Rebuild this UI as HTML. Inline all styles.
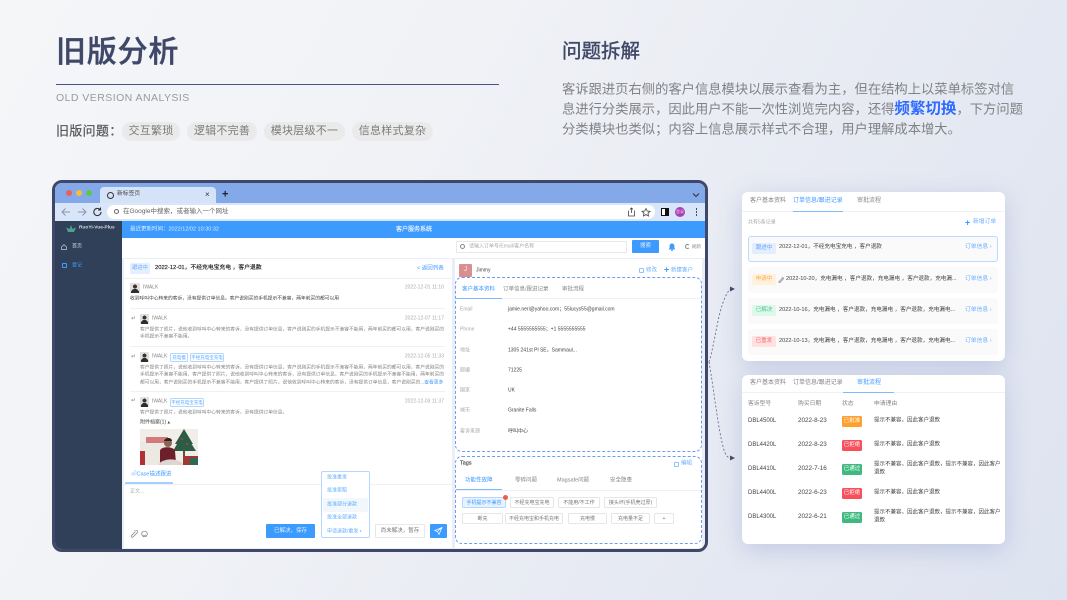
<!DOCTYPE html>
<html lang="zh"><head><meta charset="utf-8"><title>旧版分析</title>
<style>
*{margin:0;padding:0;box-sizing:border-box}
html,body{width:1067px;height:600px;overflow:hidden}
body{position:relative;font-family:"Liberation Sans","Noto Sans CJK SC",sans-serif;background:linear-gradient(120deg,#f5f6f8 0%,#f0f2f6 35%,#e8ebf3 62%,#dde3f0 100%)}
div,span.a,svg.a{position:absolute}
.t{position:absolute;white-space:nowrap;transform:translateY(-50%);line-height:1}
.chip{position:absolute;top:122px;height:19px;border-radius:10px;background:#eaeaea;color:#7b7b7b;font-size:11px;letter-spacing:.25px;line-height:19px;text-align:center;white-space:nowrap}
.s47{font-size:4.75px}.s5{font-size:5px}.s55{font-size:5.5px}.s58{font-size:5.8px}.s6{font-size:6px}.s7{font-size:7px}
.g{color:#858585}.d{color:#444}.b{color:#3d9bff}.l{color:#aaa}
.line{background:#eef0f3;height:1px}
.ava{width:10px;height:10px;background:radial-gradient(ellipse 42% 42% at 50% 100%,#2e2c2c 97%,transparent),radial-gradient(circle at 50% 36%,#3f342c 0 24%,transparent 26%),#e2e0dd;border-radius:1px}
.tag{position:absolute;height:9px;border:.7px solid #b3d8ff;border-radius:1.5px;color:#57a6ff;font-size:4.5px;line-height:8px;text-align:center;white-space:nowrap}
.mt{position:absolute;height:11px;border:.7px solid #e4e6ea;border-radius:1.5px;color:#777;font-size:5px;line-height:10px;text-align:center;white-space:nowrap;background:#fff}
.card{border-radius:6px;background:#fff;box-shadow:0 6px 24px rgba(110,130,190,.28)}
.row{left:6px;width:250px;height:26px;background:#fafafa;border-radius:3px}
.bd{left:4px;top:7px;width:24px;height:11px;border-radius:1.5px;font-size:5.5px;line-height:11px;text-align:center}
.st{position:absolute;left:842px;width:20px;height:11px;border-radius:1.5px;color:#fff;font-size:5.5px;line-height:11px;text-align:center;white-space:nowrap}
.r{font-size:5.6px;color:#444}
.k{font-size:5.5px;color:#444}
.lk{font-size:5.8px;color:#6db0ff}
</style></head><body>

<div class="t" style="left:56px;top:53px;font-size:30px;font-weight:500;letter-spacing:.8px;color:#3f4868;-webkit-text-stroke:.4px #3f4868">旧版分析</div>
<div style="left:56px;top:84px;width:443px;height:1px;background:#4a5382"></div>
<div class="t" style="left:56px;top:98px;font-size:10.5px;letter-spacing:.45px;color:#9a9a9a">OLD VERSION ANALYSIS</div>
<div class="t" style="left:56px;top:131px;font-size:13px;letter-spacing:.3px;color:#555;-webkit-text-stroke:.2px #555">旧版问题&#65306;</div>
<div class="chip" style="left:122px;width:58px">交互繁琐</div>
<div class="chip" style="left:187px;width:70px">逻辑不完善</div>
<div class="chip" style="left:264px;width:81px">模块层级不一</div>
<div class="chip" style="left:352px;width:81px">信息样式复杂</div>

<div class="t" style="left:562px;top:52px;font-size:19.5px;color:#3f4868;-webkit-text-stroke:.4px #3f4868">问题拆解</div>
<div class="t" style="left:562px;top:89px;font-size:13.3px;color:#808285">客诉跟进页右侧的客户信息模块以展示查看为主&#65292;但在结构上以菜单标签对信</div>
<div class="t" style="left:562px;top:109px;font-size:13.3px;color:#808285">息进行分类展示&#65292;因此用户不能一次性浏览完内容&#65292;还得<b style="color:#2f6bff;font-size:15.5px;font-weight:700">频繁切换</b>&#65292;下方问题</div>
<div class="t" style="left:562px;top:129px;font-size:13.3px;color:#808285">分类模块也类似&#65307;内容上信息展示样式不合理&#65292;用户理解成本增大。</div>

<!-- browser window -->
<div style="left:52px;top:180px;width:656px;height:372px;border:3px solid #3f4868;border-radius:10px;overflow:hidden;background:#e9eef7"></div>
<div style="left:55px;top:183px;width:650px;height:20px;background:#83a9e8;border-radius:7px 7px 0 0"></div>
<div style="left:65.500px;top:190px;width:6px;height:6px;border-radius:50%;background:#ee5f57"></div>
<div style="left:75.500px;top:190px;width:6px;height:6px;border-radius:50%;background:#f5bd3e"></div>
<div style="left:85.500px;top:190px;width:6px;height:6px;border-radius:50%;background:#5ec745"></div>
<div style="left:100px;top:187px;width:116px;height:16px;background:#d5e3f8;border-radius:4px 4px 0 0"></div>
<div style="left:107px;top:192px;width:7px;height:7px;border-radius:50%;border:1.6px solid #333"></div>
<div class="t s58" style="left:117px;top:195px;color:#444">新标签页</div>
<div class="t" style="left:205px;top:195px;font-size:8px;color:#333">×</div>
<div class="t" style="left:222px;top:195px;font-size:11px;font-weight:700;color:#222">+</div>
<svg class="a" style="left:692px;top:192px" width="8" height="6"><path d="M1 1.5L4 4.5L7 1.5" fill="none" stroke="#333" stroke-width="1"/></svg>
<div style="left:55px;top:203px;width:650px;height:18px;background:#d9e6f9"></div>
<svg class="a" style="left:60px;top:206px" width="44" height="12" fill="none"><path d="M10 6H2M5.5 2.5L2 6L5.5 9.5" stroke="#8b97a8"/><path d="M18 6H26M22.500 2.500L26 6L22.500 9.500" stroke="#8b97a8"/><path d="M41 6a3.600 3.600 0 1 1-1.100-2.600M40.500 1.500V4H38" stroke="#333" stroke-width="1.100"/></svg>
<div style="left:107px;top:205px;width:548px;height:14px;background:#fff;border-radius:7px"></div>
<div style="left:114px;top:209px;width:5px;height:5px;border:.8px solid #666;border-radius:50%"></div>
<div class="t" style="left:123px;top:212px;font-size:6.500px;color:#666">在Google中搜索&#65292;或者输入一个网址</div>
<svg class="a" style="left:627px;top:207px" width="24" height="10" fill="none" stroke="#444" stroke-width=".8"><path d="M2 4H1.500V9H7.500V4H7M4.500 6V1M3 2.500L4.500 1L6 2.500"/><path d="M19 1.500L20.200 4L23 4.300L21 6.200L21.500 9L19 7.600L16.500 9L17 6.200L15 4.300L17.800 4Z"/></svg>
<div style="left:661px;top:208px;width:8px;height:8px;border:1.200px solid #111;background:linear-gradient(90deg,#fff 50%,#111 50%)"></div>
<div style="left:675px;top:207px;width:10px;height:10px;border-radius:50%;background:#a83fb0;color:#e8c8ec;font-size:4px;line-height:10px;text-align:center">登录</div>
<div style="left:695.500px;top:208px;width:1.500px;height:1.500px;background:#333;border-radius:50%;box-shadow:0 3px 0 #333,0 6px 0 #333"></div>

<!-- sidebar -->
<div style="left:55px;top:221px;width:67px;height:328px;background:#2f4058;border-radius:0 0 0 7px"></div>
<svg class="a" style="left:65px;top:225px" width="12" height="8"><path d="M6 0L7.500 4L11 2.500L9 7H3L1 2.500L4.500 4Z" fill="#4ea08f"/></svg>
<div class="t" style="left:79px;top:229px;font-size:4.800px;font-weight:700;color:#d5dbe3">RuoYi-Vue-Plus</div>
<svg class="a" style="left:61px;top:244px" width="6" height="6" fill="none" stroke="#c8d0da" stroke-width=".7"><path d="M.500 3L3 .6L5.500 3V5.500H.5Z"/></svg>
<div class="t s5" style="left:72px;top:247px;color:#c8d0da">首页</div>
<div style="left:62px;top:263px;width:5px;height:5px;border:.8px solid #409eff;border-radius:1px"></div>
<div class="t s5" style="left:72px;top:266px;color:#409eff">登记</div>

<!-- top bar -->
<div style="left:122px;top:221px;width:583px;height:17px;background:#3d9bff"></div>
<div class="t s55" style="left:130px;top:229.500px;color:#d8ebff">最近更新时间&#65306;2022/12/02 10:30:32</div>
<div class="t s6" style="left:396px;top:229.500px;color:#eaf4ff;-webkit-text-stroke:.15px #eaf4ff">客户服务系统</div>
<div style="left:122px;top:238px;width:583px;height:20px;background:#fff"></div>
<div style="left:456px;top:241px;width:171px;height:12px;background:#fff;border:.7px solid #e6e8ec;border-radius:1.500px"></div>
<div style="left:460px;top:244px;width:5px;height:5px;border:.7px solid #888;border-radius:50%"></div>
<div class="t s5" style="left:469px;top:247px;color:#aaa">请输入订单号/Email/客户名称</div>
<div style="left:632px;top:240px;width:27px;height:13px;background:#3d9bff;border-radius:1px;color:#dcedff;font-size:5.500px;line-height:13px;text-align:center">搜索</div>
<svg class="a" style="left:668px;top:243px" width="8" height="8"><path d="M4 .5C2.300.5 1.600 1.800 1.600 3.200V5L.6 6.500H7.400L6.400 5V3.200C6.400 1.800 5.700.5 4 .5Z" fill="#3d9bff"/><rect x="3" y="6.800" width="2" height="1" fill="#3d9bff"/></svg>
<div style="left:685px;top:244px;width:5px;height:5px;border:.7px solid #888;border-radius:50%;border-right-color:transparent"></div>
<div class="t" style="left:692px;top:247px;font-size:4.500px;color:#888">刷新</div>

<!-- left panel -->
<div style="left:124px;top:259px;width:328px;height:289px;background:#fff"></div>
<div style="left:130px;top:263px;width:20px;height:11px;background:#e4f0ff;border-radius:1.500px;color:#6aa9ff;font-size:5.200px;line-height:11px;text-align:center">跟进中</div>
<div class="t s58" style="left:155px;top:269px;color:#222;-webkit-text-stroke:.15px #222">2022-12-01&#65292;不经充电宝充电 &#65292;客户退款</div>
<div class="t s55 b" style="left:417px;top:269px">&lt; 返回列表</div>
<div class="line" style="left:124px;top:278px;width:328px"></div>
<div class="ava" style="left:130px;top:283px"></div>
<div class="t s5 g" style="left:143px;top:288px">IWALK</div>
<div class="t s5 l" style="right:623px;top:288px">2022-12-01 11:10</div>
<div class="t s47 d" style="left:130px;top:299.500px">收到呼叫中心转来的客诉&#65292;没有提供订单信息。客户说刚买的手机提示不兼容&#65292;两年前买的都可以用</div>
<div class="line" style="left:130px;top:308px;width:315px"></div>

<div class="t s6 g" style="left:131px;top:319px">↵</div>
<div class="ava" style="left:140px;top:314px;width:9px"></div>
<div class="t s5 g" style="left:152px;top:319px">IWALK</div>
<div class="t s5 l" style="right:623px;top:319px">2022-12-07 11:17</div>
<div class="t s47 g" style="left:140px;top:330.500px">客户提供了照片&#65292;说他收到呼叫中心转来的客诉&#65292;没有提供订单信息&#65292;客户说刚买的手机提示不兼容不能用&#65292;两年前买的都可以用&#65292;客户说刚买的</div>
<div class="t s47 g" style="left:140px;top:338px">手机提示不兼容不能用。</div>
<div class="line" style="left:130px;top:346px;width:315px"></div>

<div class="t s6 g" style="left:131px;top:357px">↵</div>
<div class="ava" style="left:140px;top:352px;width:9px"></div>
<div class="t s5 g" style="left:152px;top:357px">IWALK</div>
<div class="tag" style="left:170px;top:352.500px;width:18px">充电慢</div>
<div class="tag" style="left:190px;top:352.500px;width:34px">不经充电宝充电</div>
<div class="t s5 l" style="right:623px;top:357px">2022-12-05 11:33</div>
<div class="t s47 g" style="left:140px;top:368.500px">客户提供了照片&#65292;说他收到呼叫中心转来的客诉&#65292;没有提供订单信息&#65292;客户说刚买的手机提示不兼容不能用&#65292;两年前买的都可以用&#65292;客户说刚买的</div>
<div class="t s47 g" style="left:140px;top:376px">手机提示不兼容不能用&#65292;客户提供了照片&#65292;说他收到呼叫中心转来的客诉&#65292;没有提供订单信息&#65292;客户说刚买的手机提示不兼容不能用&#65292;两年前买的</div>
<div class="t s47 g" style="left:140px;top:383.500px">都可以用&#65292;客户说刚买的手机提示不兼容不能用&#65292;客户提供了照片&#65292;说他收到呼叫中心转来的客诉&#65292;没有提供订单信息&#65292;客户说刚买的...<span style="color:#3d9bff">查看更多</span></div>
<div class="line" style="left:130px;top:391px;width:315px"></div>

<div class="t s6 g" style="left:131px;top:401px">↵</div>
<div class="ava" style="left:140px;top:397px;width:9px"></div>
<div class="t s5 g" style="left:152px;top:401.500px">IWALK</div>
<div class="tag" style="left:170px;top:397.500px;width:34px">不经充电宝充电</div>
<div class="t s5 l" style="right:623px;top:401.500px">2022-12-03 11:37</div>
<div class="t s47 g" style="left:140px;top:413.500px">客户提供了照片&#65292;说他收到呼叫中心转来的客诉&#65292;没有提供订单信息。</div>
<div class="t s5 d" style="left:140px;top:423px">附件档案(1) ▴</div>
<svg class="a" style="left:140px;top:429px" width="58" height="36">
<rect width="58" height="36" fill="#f1eeea"/><rect x="0" y="12" width="30" height="24" fill="#ece8e2"/>
<rect x="6" y="8" width="22" height="6" fill="#c44a4a" opacity=".7"/>
<rect x="0" y="22" width="5" height="14" fill="#b22f35"/>
<path d="M44 0L53 15H35Z" fill="#2e5a42"/><path d="M44 3L56 22H33Z" fill="#2b5c44"/><circle cx="42" cy="10" r="1" fill="#d33"/><circle cx="47" cy="15" r="1" fill="#d33"/><rect x="43" y="22" width="2" height="5" fill="#6a4a32"/>
<path d="M20 34V22C20 17 34 17 35 22L36 34Z" fill="#6e1f2c"/><circle cx="28" cy="14" r="4" fill="#8c6750"/><path d="M24 12C25 8 32 8 32 12Z" fill="#2a2422"/>
<path d="M18 36C22 29 38 28 44 36Z" fill="#dcd6d0"/>
<rect x="43" y="27" width="15" height="9" fill="#9d3a36"/><rect x="50" y="29" width="8" height="7" fill="#2f6a4f"/>
</svg>

<!-- editor -->
<div style="left:124px;top:466px;width:328px;height:82px;background:#fff"></div>
<div class="line" style="left:124px;top:483.500px;width:328px"></div>
<div class="t s55 b" style="left:131px;top:474.500px">⏎Case描述跟进</div>
<div style="left:125px;top:482px;width:48px;height:1.500px;background:#a8d0ff"></div>
<div class="t s5 l" style="left:130px;top:491.500px">正文...</div>
<svg class="a" style="left:130px;top:530px" width="20" height="8" fill="none" stroke="#777" stroke-width=".7"><path d="M5.500 1.500L1.500 5.500a1 1 0 0 0 1.500 1.500L7 3a1.700 1.700 0 0 0-2.500-2.500"/><circle cx="14.500" cy="4" r="2.800"/><path d="M13 4.800c.8 1 2.200 1 3 0"/></svg>
<div style="left:266px;top:524px;width:49px;height:14px;background:#3d9bff;border-radius:1px;color:#dcedff;font-size:5.500px;line-height:14px;text-align:center">已解决&#65292;保存</div>
<div style="left:375px;top:524px;width:50px;height:14px;background:#fff;border:.7px solid #e6e8ec;border-radius:1px;color:#777;font-size:5.500px;line-height:13px;text-align:center">尚未解决&#65292;暂存</div>
<div style="left:430px;top:524px;width:17px;height:14px;background:#3d9bff;border-radius:1px"></div>
<svg class="a" style="left:434px;top:527px" width="9" height="8" fill="none" stroke="#fff" stroke-width=".7"><path d="M8 .5L.8 3.500L3.500 4.500L5 7.500ZM3.500 4.500L8 .5"/></svg>

<div style="left:321px;top:470.500px;width:49px;height:67px;background:#fff;border:.8px solid #b5d6ff;border-radius:2px"></div>
<div style="left:323px;top:497.500px;width:45px;height:14px;background:#f2f7fb"></div>
<div class="t s5 b" style="left:327px;top:477.500px;opacity:.8">批准重发</div>
<div class="t s5 b" style="left:327px;top:491px;opacity:.8">批准索赔</div>
<div class="t s5 b" style="left:327px;top:504.500px;opacity:.8">批准部分退款</div>
<div class="t s5 b" style="left:327px;top:518px;opacity:.8">批准全部退款</div>
<div class="t s5 b" style="left:327px;top:531.500px;opacity:.8">申请退款/重发 ▪</div>

<!-- right panel -->
<div style="left:455px;top:259px;width:247px;height:289px;background:#fff"></div>
<div style="left:459px;top:264px;width:13px;height:13px;background:#d98f8f;border-radius:1px;color:#fff;font-size:6px;line-height:13px;text-align:center">J</div>
<div class="t s5 d" style="left:476px;top:270.500px">Jimmy</div>
<div style="left:639px;top:268px;width:5px;height:5px;border:.7px solid #8fc2ff;border-radius:1px"></div>
<div class="t s55" style="left:646px;top:270.500px;color:#6db0ff">修改</div>
<div class="t" style="left:664px;top:270px;font-size:9px;font-weight:700;color:#3d9bff">+</div>
<div class="t s55" style="left:671px;top:270.500px;color:#6db0ff">新建客户</div>

<div style="left:455px;top:277px;width:247px;height:175px;border:1px dashed #6e9cf5;border-radius:7px"></div>
<div style="left:455px;top:456px;width:247px;height:88px;border:1px dashed #6e9cf5;border-radius:7px"></div>

<div class="t s55 b" style="left:462px;top:289.500px">客户基本资料</div>
<div class="t s55 g" style="left:503px;top:289.500px">订单信息/跟进记录</div>
<div class="t s55 g" style="left:562px;top:289.500px">审批流程</div>
<div style="left:456px;top:298px;width:245px;height:1px;background:#eef0f3"></div>
<div style="left:456px;top:298px;width:46px;height:1px;background:#7dbaff"></div>

<div class="t s5 l" style="left:460px;top:310px">Email</div><div class="t s5 d" style="left:508px;top:310px">jamie.neri@yahoo.com&#65307;55lucys55@gmail.com</div>
<div class="t s5 l" style="left:460px;top:330px">Phone</div><div class="t s5 d" style="left:508px;top:330px">+44 5555555555&#65307;+1 5555555555</div>
<div class="t s5 l" style="left:460px;top:350.500px">地址</div><div class="t s5 d" style="left:508px;top:350.500px">1305 241st Pl SE&#65292;Sammaul...</div>
<div class="t s5 l" style="left:460px;top:370.500px">邮编</div><div class="t s5 d" style="left:508px;top:370.500px">71225</div>
<div class="t s5 l" style="left:460px;top:391px">国家</div><div class="t s5 d" style="left:508px;top:391px">UK</div>
<div class="t s5 l" style="left:460px;top:411px">城市</div><div class="t s5 d" style="left:508px;top:411px">Granite Falls</div>
<div class="t s5 l" style="left:460px;top:431.500px">客诉来源</div><div class="t s5 d" style="left:508px;top:431.500px">呼叫中心</div>

<div class="t s55" style="left:460px;top:464px;color:#444;-webkit-text-stroke:.15px #444">Tags</div>
<div style="left:674px;top:461.500px;width:5px;height:5px;border:.7px solid #8fc2ff;border-radius:1px"></div>
<div class="t s55" style="left:681px;top:464px;color:#6db0ff">编辑</div>
<div class="t s55 b" style="left:465px;top:481px">功能性故障</div>
<div class="t s55 g" style="left:515px;top:481px">零碎问题</div>
<div class="t s55 g" style="left:557px;top:481px">Magsafe问题</div>
<div class="t s55 g" style="left:610px;top:481px">安全隐患</div>
<div style="left:456px;top:489.500px;width:245px;height:1px;background:#eef0f3"></div>
<div style="left:456px;top:489px;width:46px;height:1px;background:#7dbaff"></div>

<div class="mt" style="left:462px;top:497px;width:44px;background:#e8f3ff;border-color:#b5d6ff;color:#3d9bff">手机提示不兼容</div>
<div style="left:503px;top:495px;width:5px;height:5px;border-radius:50%;background:#e8604c"></div>
<div class="mt" style="left:510px;top:497px;width:44px">不经充电宝充电</div>
<div class="mt" style="left:558px;top:497px;width:42px">不能用/不工作</div>
<div class="mt" style="left:604px;top:497px;width:53px">接头坏(手机壳过厚)</div>
<div class="mt" style="left:462px;top:513px;width:41px">断充</div>
<div class="mt" style="left:505px;top:513px;width:58px">不经充电宝和手机充电</div>
<div class="mt" style="left:568px;top:513px;width:39px">充电慢</div>
<div class="mt" style="left:611px;top:513px;width:39px">充电量不足</div>
<div class="mt" style="left:654px;top:513px;width:20px">+</div>

<!-- connectors -->
<svg class="a" style="left:700px;top:280px" width="40" height="190" fill="none"><path d="M9 82C16 60 18 24 30 9" stroke="#5b6386" stroke-width=".8" stroke-dasharray="2 2"/><path d="M9 82C14 110 18 150 24 170Q26 177 30 178" stroke="#5b6386" stroke-width=".8" stroke-dasharray="2 2"/><path d="M30 6.500L35 9L30 11.500Z" fill="#3f4868"/><path d="M30 175.500L35 178L30 180.500Z" fill="#3f4868"/></svg>

<!-- card 1 -->
<div class="card" style="left:742px;top:192px;width:263px;height:169px">
<div style="left:0;top:19px;width:263px;height:1px;background:#f0f1f4"></div>
<div style="left:51px;top:18.500px;width:50px;height:1.200px;background:#7dbaff"></div>
<div class="row" style="top:43.500px;background:#fafafa;border:1px solid #bcd9ff"><div class="bd" style="top:6.500px;left:3px;background:#e3eeff;color:#6aa0ff">跟进中</div></div>
<div class="row" style="top:74.500px"><div class="bd" style="background:#fff1dc;color:#ffab4a">申请中</div></div>
<div class="row" style="top:105.500px"><div class="bd" style="background:#dff8ec;color:#4cc78f">已解决</div></div>
<div class="row" style="top:136.500px"><div class="bd" style="background:#ffe1e1;color:#f36a6a">已重发</div></div>
</div>
<div class="t s6 g" style="left:750px;top:201px">客户基本资料</div>
<div class="t s6 b" style="left:793px;top:201px">订单信息/跟进记录</div>
<div class="t s6 g" style="left:857px;top:201px">审批流程</div>
<div class="t s5 l" style="left:748px;top:223px">共有5条记录</div>
<div class="t" style="left:965px;top:222.500px;font-size:9px;font-weight:700;color:#3d9bff">+</div>
<div class="t s58" style="left:973px;top:223px;color:#6db0ff">新增订单</div>
<div class="t r" style="left:779px;top:248px">2022-12-01&#65292;不经充电宝充电 &#65292;客户退款</div>
<svg class="a" style="left:778px;top:276.500px" width="6" height="6" fill="none" stroke="#777" stroke-width=".6"><path d="M4.500 1L1 4.500a.7.7 0 0 0 1 1L5.300 2a1 1 0 0 0-1.500-1.300"/></svg>
<div class="t r" style="left:786px;top:279.500px">2022-10-20&#65292;充电漏电 &#65292;客户退款&#65292;充电漏电 &#65292;客户退款&#65292;充电漏...</div>
<div class="t r" style="left:779px;top:310.500px">2022-10-16&#65292;充电漏电 &#65292;客户退款&#65292;充电漏电 &#65292;客户退款&#65292;充电漏电...</div>
<div class="t r" style="left:779px;top:342px">2022-10-13&#65292;充电漏电 &#65292;客户退款&#65292;充电漏电 &#65292;客户退款&#65292;充电漏电...</div>
<div class="t lk" style="left:965px;top:248px">订单信息 ›</div>
<div class="t lk" style="left:965px;top:279.500px">订单信息 ›</div>
<div class="t lk" style="left:965px;top:310.500px">订单信息 ›</div>
<div class="t lk" style="left:965px;top:342px">订单信息 ›</div>

<!-- card 2 -->
<div class="card" style="left:742px;top:374.500px;width:263px;height:169px">
<div style="left:0;top:17.500px;width:263px;height:1px;background:#f0f1f4"></div>
<div style="left:101px;top:17px;width:51px;height:1.200px;background:#7dbaff"></div>
</div>
<div class="t s6 g" style="left:750px;top:383px">客户基本资料</div>
<div class="t s6 g" style="left:793px;top:383px">订单信息/跟进记录</div>
<div class="t s6 b" style="left:857px;top:383px">审批流程</div>
<div class="t s58 g" style="left:748px;top:405px">客诉型号</div>
<div class="t s58 g" style="left:798px;top:405px">购买日期</div>
<div class="t s58 g" style="left:842px;top:405px">状态</div>
<div class="t s58 g" style="left:874px;top:405px">申请理由</div>

<div class="t s6 d" style="left:748px;top:421px">DBL4500L</div><div class="t s6 d" style="left:798px;top:421px;font-size:6.300px">2022-8-23</div>
<div class="st" style="top:416px;background:#ff9f2e">已批准</div>
<div class="t k" style="left:874px;top:421px">提示不兼容&#65292;因此客户退款</div>

<div class="t s6 d" style="left:748px;top:445px">DBL4420L</div><div class="t s6 d" style="left:798px;top:445px;font-size:6.300px">2022-8-23</div>
<div class="st" style="top:440px;background:#f7505a">已拒绝</div>
<div class="t k" style="left:874px;top:445px">提示不兼容&#65292;因此客户退款</div>

<div class="t s6 d" style="left:748px;top:468.500px">DBL4410L</div><div class="t s6 d" style="left:798px;top:468.500px;font-size:6.300px">2022-7-16</div>
<div class="st" style="top:463.500px;background:#3fb97f">已通过</div>
<div class="t k" style="left:874px;top:465px">提示不兼容&#65292;因此客户退款&#65292;提示不兼容&#65292;因此客户</div>
<div class="t k" style="left:874px;top:473px">退款</div>

<div class="t s6 d" style="left:748px;top:493px">DBL4400L</div><div class="t s6 d" style="left:798px;top:493px;font-size:6.300px">2022-6-23</div>
<div class="st" style="top:488px;background:#f7505a">已拒绝</div>
<div class="t k" style="left:874px;top:493px">提示不兼容&#65292;因此客户退款</div>

<div class="t s6 d" style="left:748px;top:516.500px">DBL4300L</div><div class="t s6 d" style="left:798px;top:516.500px;font-size:6.300px">2022-6-21</div>
<div class="st" style="top:511.500px;background:#3fb97f">已通过</div>
<div class="t k" style="left:874px;top:513px">提示不兼容&#65292;因此客户退款&#65292;提示不兼容&#65292;因此客户</div>
<div class="t k" style="left:874px;top:520.500px">退款</div>
</body></html>
